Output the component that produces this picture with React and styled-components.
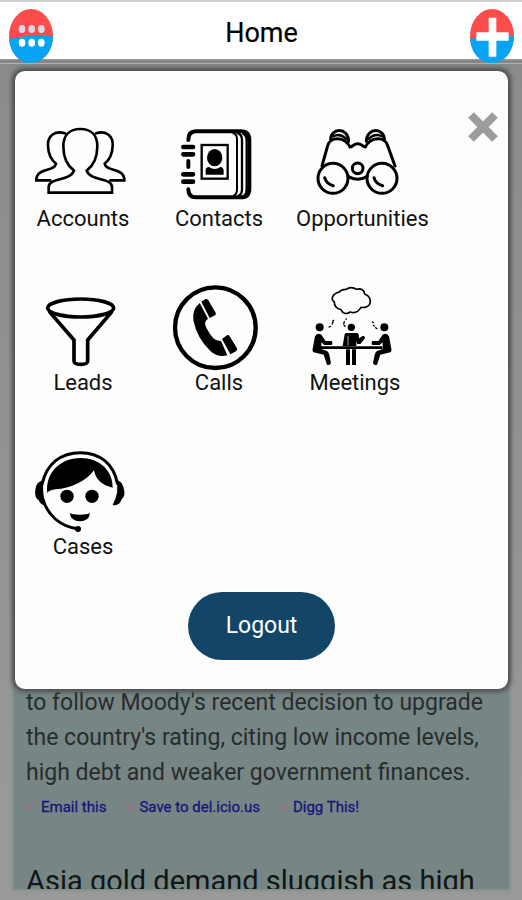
import React from "react";
import styled, { createGlobalStyle } from "styled-components";

const GlobalStyle = createGlobalStyle`
  * { box-sizing: border-box; }
  body { margin: 0; font-family: Roboto, "Liberation Sans", sans-serif; background: #989898; }
  button { font: inherit; border: 0; padding: 0; background: none; cursor: pointer; }
`;

const Page = styled.div`
  min-height: 100vh;
  display: flex;
  flex-direction: column;
`;

const Header = styled.header`
  height: 59px;
  flex: none;
  display: flex;
  justify-content: space-between;
  align-items: flex-start;
  padding: 7px 8px 0 9px;
  border-top: 2px solid #d0d0d0;
  background: #fff;
`;

const Title = styled.h1`
  margin: 0;
  font-size: 27px;
  line-height: 48px;
  font-weight: 400;
  color: #000;
  -webkit-text-stroke: 0.2px #000;
`;

const RoundButton = styled.button`
  width: 44px;
  height: 54px;
  z-index: 1;
  svg { display: block; width: 100%; height: 100%; }
`;

const Stage = styled.main`
  flex: 1;
  display: grid;
  grid-template-columns: minmax(0, 1fr);
  padding: 11px 13px 11px 14px;
  background:
    linear-gradient(#9a9a9a 0 1px, #868686 1px 4px, #b2b2b2 4px 5px, #8a8a8a 5px 7px, transparent 7px) top / 100% 7px no-repeat,
    linear-gradient(#8b8b8b, #999 90%);
`;

const Feed = styled.section`
  grid-area: 1 / 1;
  display: flex;
  flex-direction: column;
  justify-content: flex-end;
  padding: 0 12px;
  background: #778585;
  box-shadow: 0 0 3px 1px #7f8686;
`;

const Article = styled.p`
  margin: 0;
  font-size: 23px;
  line-height: 35px;
  color: #272d2d;
`;

const Links = styled.nav`
  display: flex;
  gap: 18px;
  margin-bottom: 40px;
`;

const FeedLink = styled.a`
  display: flex;
  align-items: center;
  gap: 6px;
  font-size: 15px;
  line-height: 34px;
  color: #15157c;
  text-decoration: none;
  white-space: nowrap;
  -webkit-text-stroke: 0.3px #15157c;
  &::before {
    content: "";
    width: 9px;
    height: 9px;
    border-radius: 5px;
    background: #857f83;
  }
`;

const Headline = styled.h2`
  margin: 0;
  height: 25px;
  overflow: hidden;
  font-size: 29px;
  font-weight: 400;
  line-height: 35px;
  white-space: nowrap;
  color: #101515;
`;

const Dialog = styled.div`
  grid-area: 1 / 1;
  align-self: start;
  z-index: 1;
  display: flex;
  flex-direction: column;
  padding: 41px 10px 29px 0;
  border: 1px solid #555;
  border-radius: 11px;
  background: #fdfdfd;
  box-shadow: 0 0 4px 2px #4c4f4f;
`;

const DialogTop = styled.div`
  display: flex;
  justify-content: space-between;
  align-items: flex-start;
`;

const Menu = styled.nav`
  display: grid;
  grid-template-columns: repeat(3, 136px);
  row-gap: 50px;
  padding-top: 4px;
`;

const MenuItem = styled.button`
  padding: 0 9px;
  color: #111;
  svg { display: block; width: 118px; height: 92px; }
`;

const Label = styled.span`
  display: flex;
  justify-content: safe center;
  font-size: 22px;
  line-height: 22px;
  white-space: nowrap;
`;

const Close = styled.button`
  width: 30px;
  height: 30px;
  svg { display: block; }
`;

const Logout = styled.button`
  align-self: center;
  margin: 34px 0 0 10px;
  padding: 20px 38px;
  border-radius: 34px;
  background: #134566;
  color: #fff;
  font-size: 23px;
  line-height: 28px;
`;

const Drawing = ({ x, y, children }) => (
  <svg viewBox={`${x} ${y} 354 276`} fill="none" stroke="#000" strokeWidth="9" strokeLinejoin="round" strokeLinecap="round" aria-hidden="true">
    {children}
  </svg>
);

const Accounts = () => (
  <Drawing x={12} y={18}>
    <g strokeWidth="8" strokeLinejoin="miter">
      <path d="M135 70C106 60 82 77 84 108C85 133 93 149 108 161C104 187 48 171 49 211H91" />
      <path d="M228 70C257 60 280 77 278 108C277 133 269 149 254 161C258 187 314 171 313 211H271" />
      <path fill="#fdfdfd" d="M86 248V231C86 202 151 214 162 182C139 165 130 139 130 109C130 76 149 57 181 57C213 57 232 76 232 109C232 139 223 165 200 182C211 214 276 202 276 231V248Z" />
    </g>
  </Drawing>
);

const Contacts = () => (
  <Drawing x={0} y={18}>
    <path strokeWidth="12" d="M85 90C85 72 93 64 108 64H242C260 64 268 73 268 91V236C268 255 260 262 242 262H108C93 262 85 254 85 238M85 153V171" />
    <path strokeWidth="14" d="M70 111H99M70 133H99M70 193H99M70 215H99" />
    <path strokeWidth="6" d="M220 70Q231 72 231 88V237Q231 252 222 256" />
    <path strokeWidth="7" d="M234 70Q246 74 246 90V238Q246 253 236 257M250 71Q260 76 260 92V238Q260 252 252 257" />
    <rect x="125" y="105" width="78" height="101" strokeWidth="7" strokeLinejoin="miter" />
    <ellipse cx="164" cy="143" rx="23" ry="26" fill="#000" stroke="none" />
    <path fill="#000" stroke="none" d="M137 194V180Q138 171 147 171Q164 183 181 171Q190 172 191 181V194Z" />
  </Drawing>
);

const Opportunities = () => (
  <Drawing x={18} y={18}>
    <g strokeWidth="9">
      <path d="M96 168L113 107C120 79 164 78 180 111C190 111 190 101 203 101C216 101 216 111 226 111C242 78 286 79 293 107L315 168" />
      <path d="M122 91C120 53 175 50 176 94M229 94C230 50 285 53 283 91" />
      <path strokeWidth="7" d="M130 79Q150 68 169 87M236 87Q255 68 276 79" />
      <circle cx="129" cy="205" r="45" />
      <circle cx="276" cy="205" r="45" />
      <circle cx="203" cy="175" r="16" />
      <path d="M174 199Q203 216 232 199M104 203Q109 222 130 227M252 203Q257 222 278 227" />
    </g>
  </Drawing>
);

const Leads = () => (
  <Drawing x={12} y={15}>
    <ellipse cx="182" cy="99" rx="99" ry="27" strokeWidth="11" />
    <path strokeWidth="11" d="M90 112L162 195V258Q162 268 182 268Q203 268 203 258V195L274 112" />
  </Drawing>
);

const Calls = () => (
  <Drawing x={0} y={15}>
    <circle cx="166" cy="158" r="121" strokeWidth="13" />
    <g fill="#000" stroke="none">
      <path d="M124 80L137 72Q142 71 145 76L167 113Q169 118 165 121L149 129Z" />
      <path d="M119 84L144 131Q130 140 139 158Q153 184 164 193Q173 198 183 198L202 241Q174 249 151 228Q111 190 100 136Q96 104 119 84Z" />
      <path d="M186 192L202 180Q206 179 209 184L231 220Q233 225 228 229L211 238Z" />
    </g>
  </Drawing>
);

const Person = ({ flip }) => (
  <g transform={flip ? "translate(372 0) scale(-1 1)" : undefined}>
    <circle cx="89" cy="157" r="12" fill="#000" stroke="none" />
    <path fill="#000" stroke="none" d="M75 184Q81 171 94 179L107 198H125Q130 204 125 210H103L94 202V222L111 228Q116 231 118 240L123 264Q120 273 111 269L101 239L71 232Q66 228 68 221Z" />
  </g>
);

const Meetings = () => (
  <Drawing x={18} y={15}>
    <path strokeWidth="5" d="M148 51C155 42 164 43 169 43C178 35 191 37 199 43C213 38 224 47 224 57C239 62 243 75 240 84C239 94 224 99 213 97C205 110 194 116 181 111C168 120 157 114 153 104C139 102 132 91 133 81C121 73 127 56 148 51Z" />
    <Person />
    <Person flip />
    <circle cx="184" cy="157" r="11" fill="#000" stroke="none" />
    <path fill="#000" stroke="none" d="M164 178Q164 174 170 174H202Q207 175 207 190L219 182Q225 183 225 190L211 207H202L199 198V213H158Z" />
    <path strokeWidth="8" strokeLinecap="butt" d="M92 218H277" />
    <path strokeWidth="12" strokeLinecap="butt" d="M174 223V270M192 223V270" />
    <path stroke="#fdfdfd" strokeWidth="2" d="M174 183V210" />
    <g strokeWidth="4">
      <path d="M117 156L122 154M127 147L129 139M129 137L131 136M163 140L161 146M168 133L169 132M162 151L165 154M247 141L250 143M251 151L253 153M257 158L261 161" />
    </g>
  </Drawing>
);

const Cases = () => (
  <Drawing x={12} y={12}>
    <path strokeWidth="9" d="M67 130C80 71 123 38 181 38C239 38 281 71 292 130" />
    <path strokeWidth="9" d="M69 178C82 223 118 259 172 266" />
    <circle cx="174" cy="267" r="9" fill="#000" stroke="none" />
    <g fill="#000" stroke="none">
      <path d="M72 118Q64 155 78 197Q61 195 56 180Q42 173 46 149Q48 128 63 123Z" />
      <path d="M288 118Q300 154 278 195Q298 199 305 178Q318 169 311 145Q307 127 297 123Z" />
      <path d="M82 159C75 98 122 54 181 54C240 54 279 93 278 143Q230 133 222 91Q203 117 171 131Q141 145 107 148Q88 150 82 159Z" />
      <circle cx="141" cy="169" r="20" />
      <circle cx="216" cy="169" r="20" />
      <path d="M149 219Q156 224 180 224Q202 224 210 219Q207 244 180 244Q153 244 149 219Z" />
    </g>
  </Drawing>
);

const Disc = ({ children }) => (
  <svg viewBox="0 0 132 162" aria-hidden="true">
    <ellipse cx="66" cy="81" rx="66" ry="81" fill="#fc4c4c" />
    <path d="M0 89Q65 76 132 81C132 127 102 162 66 162C30 162 3 132 0 89Z" fill="#08a4f4" />
    {children}
  </svg>
);

const items = [
  ["Accounts", Accounts],
  ["Contacts", Contacts],
  ["Opportunities", Opportunities],
  ["Leads", Leads],
  ["Calls", Calls],
  ["Meetings", Meetings],
  ["Cases", Cases],
];

export default function App() {
  return (
    <Page>
      <GlobalStyle />
      <Header>
        <RoundButton aria-label="Menu">
          <Disc>
            {[39, 68, 97].map((x) => (
              <g key={x}>
                <ellipse cx={x} cy="60" rx="10" ry="12" fill="#ddd8e2" />
                <ellipse cx={x} cy="101" rx="10" ry="12" fill="#fff" />
              </g>
            ))}
          </Disc>
        </RoundButton>
        <Title>Home</Title>
        <RoundButton aria-label="Add">
          <Disc>
            <path d="M56 26H79V70H116V95H79V143H56V95H19V70H56Z" fill="#fff" />
          </Disc>
        </RoundButton>
      </Header>
      <Stage>
        <Feed>
          <Article>
            to follow Moody's recent decision to upgrade the country's rating, citing low income levels, high debt and weaker government finances.
          </Article>
          <Links>
            <FeedLink href="#email">Email this</FeedLink>
            <FeedLink href="#save">Save to del.icio.us</FeedLink>
            <FeedLink href="#digg">Digg This!</FeedLink>
          </Links>
          <Headline>Asia gold demand sluggish as high</Headline>
        </Feed>
        <Dialog role="dialog" aria-label="Menu">
          <DialogTop>
            <Menu>
              {items.map(([name, Icon]) => (
                <MenuItem key={name}>
                  <Icon />
                  <Label>{name}</Label>
                </MenuItem>
              ))}
            </Menu>
            <Close aria-label="Close">
              <svg viewBox="0 0 30 30" width="30" height="30" stroke="#9c9c9c" strokeWidth="8">
                <path d="M3 3L27 27M27 3L3 27" />
              </svg>
            </Close>
          </DialogTop>
          <Logout>Logout</Logout>
        </Dialog>
      </Stage>
    </Page>
  );
}
